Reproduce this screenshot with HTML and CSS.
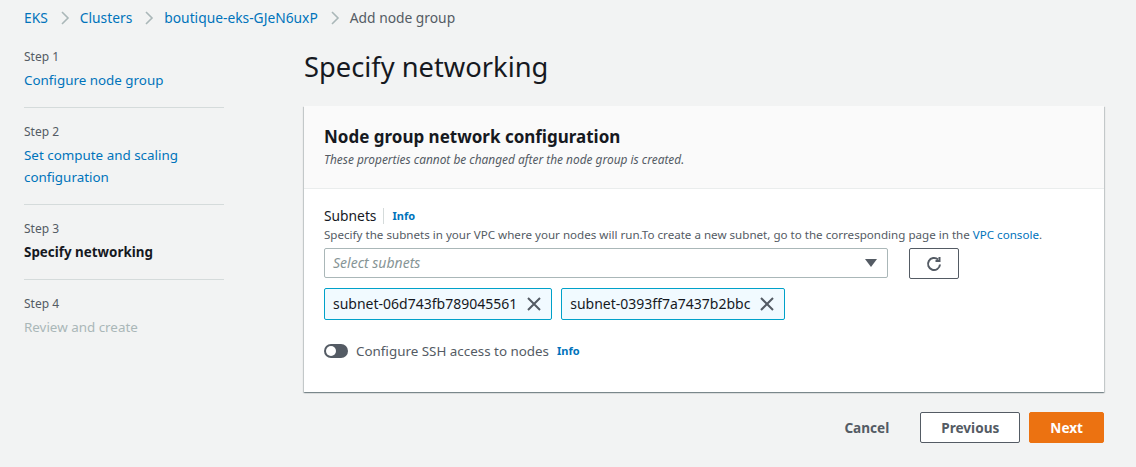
FILE: index.html
```html
<!DOCTYPE html>
<html>
<head>
<meta charset="utf-8">
<link rel="stylesheet" href="styles.css">
</head>
<body>
<nav class="crumbs">
  <a class="crumb-link">EKS</a>
  <svg class="chev" viewBox="0 0 10 14" width="10" height="14"><path d="M2 1l6 6-6 6" fill="none" stroke="#aab7b8" stroke-width="1.6"/></svg>
  <a class="crumb-link">Clusters</a>
  <svg class="chev" viewBox="0 0 10 14" width="10" height="14"><path d="M2 1l6 6-6 6" fill="none" stroke="#aab7b8" stroke-width="1.6"/></svg>
  <a class="crumb-link">boutique-eks-GJeN6uxP</a>
  <svg class="chev" viewBox="0 0 10 14" width="10" height="14"><path d="M2 1l6 6-6 6" fill="none" stroke="#aab7b8" stroke-width="1.6"/></svg>
  <span class="crumb-current">Add node group</span>
</nav>
<div class="layout">
  <aside class="steps">
    <div class="step">
      <div class="step-num">Step 1</div>
      <a class="step-link">Configure node group</a>
    </div>
    <div class="step">
      <div class="step-num">Step 2</div>
      <a class="step-link">Set compute and scaling configuration</a>
    </div>
    <div class="step">
      <div class="step-num">Step 3</div>
      <div class="step-current">Specify networking</div>
    </div>
    <div class="step step-last">
      <div class="step-num">Step 4</div>
      <div class="step-disabled">Review and create</div>
    </div>
  </aside>
  <main class="main">
    <h1 class="title">Specify networking</h1>
    <section class="card">
      <header class="card-head">
        <h2 class="card-title">Node group network configuration</h2>
        <p class="card-sub">These properties cannot be changed after the node group is created.</p>
      </header>
      <div class="card-body">
        <div class="label-row">
          <span class="label">Subnets</span>
          <span class="label-sep"></span>
          <a class="info">Info</a>
        </div>
        <div class="desc">Specify the subnets in your VPC where your nodes will run.To create a new subnet, go to the corresponding page in the <a class="desc-link">VPC console</a>.</div>
        <div class="select-row">
          <div class="select">
            <span class="placeholder">Select subnets</span>
            <svg class="caret" viewBox="0 0 12 8" width="12" height="8"><path d="M0 0h12L6 8z" fill="#545b64"/></svg>
          </div>
          <button class="refresh">
            <svg viewBox="0 0 16 16" width="16" height="16"><path d="M14 8.5a6 6 0 1 1-1.9-4.9" fill="none" stroke="#545b64" stroke-width="2"/><path d="M13.5 1v4h-4" fill="none" stroke="#545b64" stroke-width="2"/></svg>
          </button>
        </div>
        <div class="tokens">
          <div class="token">
            <span>subnet-06d743fb789045561</span>
            <svg class="x" viewBox="0 0 14 14" width="14" height="14"><path d="M1 1l12 12M13 1L1 13" stroke="#545b64" stroke-width="2"/></svg>
          </div>
          <div class="token">
            <span>subnet-0393ff7a7437b2bbc</span>
            <svg class="x" viewBox="0 0 14 14" width="14" height="14"><path d="M1 1l12 12M13 1L1 13" stroke="#545b64" stroke-width="2"/></svg>
          </div>
        </div>
        <div class="toggle-row">
          <span class="toggle"><span class="knob"></span></span>
          <span class="toggle-label">Configure SSH access to nodes</span>
          <a class="info">Info</a>
        </div>
      </div>
    </section>
    <div class="actions">
      <button class="btn btn-link">Cancel</button>
      <button class="btn btn-normal">Previous</button>
      <button class="btn btn-primary">Next</button>
    </div>
  </main>
</div>
</body>
</html>
```

FILE: styles.css
```css
* { box-sizing: border-box; }
body {
  margin: 0;
  background: #f2f3f3;
  font-family: "Noto Sans", "Open Sans", sans-serif;
  font-size: 14px;
  line-height: 22px;
  color: #16191f;
}
a { color: #0073bb; text-decoration: none; }
.crumbs {
  display: flex;
  align-items: center;
  padding: 7px 24px 0;
  height: 28px;
  line-height: 20px;
  font-size: 13.8px;
}
.chev { margin: 0 10px 0 12px; }
.crumb-current { color: #545b64; }
.layout {
  display: flex;
  padding: 21px 32px 0 24px;
}
.steps { width: 200px; flex: none; font-size: 13.4px; }
.step {
  padding-bottom: 16px;
  margin-bottom: 16px;
  border-bottom: 1px solid #d5dbdb;
}
.step-last { border-bottom: none; }
.step-num {
  font-size: 12px;
  line-height: 16px;
  color: #545b64;
  margin-bottom: 4px;
}
.step-link { display: block; }
.step-current { font-weight: bold; }
.step-disabled { color: #aab7b8; }
.main {
  margin-left: 80px;
  width: 800px;
}
.title {
  margin: 0 0 21px;
  font-size: 27.3px;
  line-height: 36px;
  font-weight: normal;
}
.card {
  background: #fff;
  box-shadow: 0 1px 1px 0 rgba(0,28,36,.3), 1px 1px 1px 0 rgba(0,28,36,.15), -1px 1px 1px 0 rgba(0,28,36,.15);
}
.card-head {
  background: #fafafa;
  border-bottom: 1px solid #eaeded;
  padding: 19px 20px 21px;
}
.card-title {
  margin: 0;
  font-size: 17px;
  line-height: 24px;
  font-weight: bold;
}
.card-sub {
  margin: 2px 0 0;
  font-size: 11.9px;
  line-height: 16px;
  font-style: italic;
  color: #545b64;
}
.card-body { padding: 16px 20px 30px; }
.label-row { display: flex; align-items: center; font-size: 13.8px; }
.label-sep {
  width: 1px;
  height: 16px;
  background: #d5dbdb;
  margin: 0 8px 0 7px;
}
.info { font-size: 11px; font-weight: bold; }
.desc {
  font-size: 11.6px;
  line-height: 16px;
  color: #545b64;
}
.desc-link { color: #0073bb; }
.select-row {
  display: flex;
  margin-top: 5px;
}
.select {
  width: 564px;
  height: 30px;
  border: 1px solid #aab7b8;
  border-radius: 2px;
  display: flex;
  align-items: center;
  justify-content: space-between;
  padding: 0 10px 0 8px;
}
.placeholder { color: #879596; font-style: italic; }
.refresh {
  margin-left: 21px;
  width: 50px;
  height: 31px;
  border: 1px solid #545b64;
  border-radius: 2px;
  background: #fff;
  display: flex;
  align-items: center;
  justify-content: center;
  padding: 0;
}
.tokens {
  display: flex;
  gap: 9px;
  margin-top: 9px;
}
.token {
  height: 32px;
  display: flex;
  align-items: center;
  gap: 10px;
  padding: 0 10px 0 8px;
  background: #f1faff;
  border: 1px solid #00a1c9;
  border-radius: 2px;
}
.toggle-row {
  display: flex;
  align-items: center;
  margin-top: 20px;
}
.toggle {
  width: 24px;
  height: 14px;
  border-radius: 7px;
  background: #545b64;
  position: relative;
  margin-right: 8px;
}
.knob {
  position: absolute;
  left: 2px;
  top: 2px;
  width: 10px;
  height: 10px;
  border-radius: 50%;
  background: #fff;
}
.toggle-label { color: #545b64; margin-right: 8px; font-size: 13.4px; }
.actions {
  display: flex;
  justify-content: flex-end;
  gap: 9px;
  margin-top: 20px;
}
.btn {
  font-family: inherit;
  font-size: 13.6px;
  font-weight: bold;
  height: 31px;
  padding: 0 20px;
  border-radius: 2px;
  border: 1px solid transparent;
  line-height: 22px;
}
.btn-link { background: transparent; color: #545b64; margin-right: 1px; }
.btn-normal { background: #fff; border-color: #545b64; color: #545b64; }
.btn-primary { background: #ec7211; border-color: #ec7211; color: #fff; }
```
